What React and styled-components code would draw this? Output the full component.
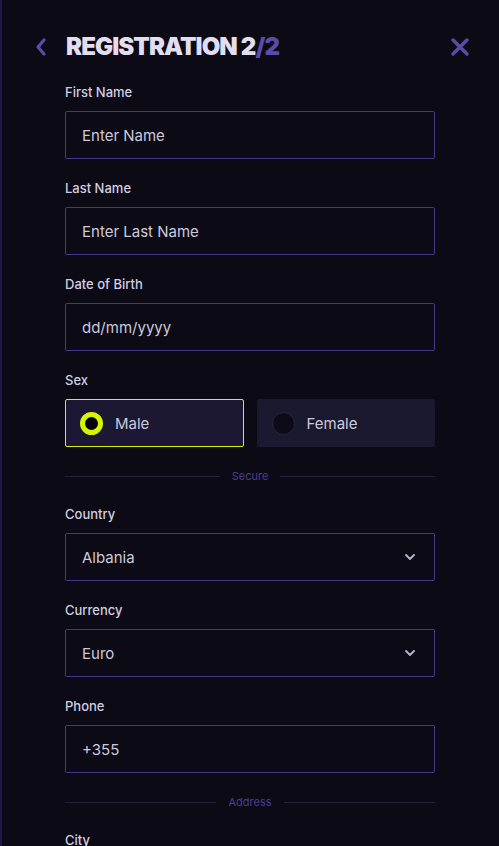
import React, { useState } from "react";
import styled, { createGlobalStyle } from "styled-components";

const GlobalStyle = createGlobalStyle`
  html, body {
    margin: 0;
    padding: 0;
    background: #0b0a15;
  }
  * {
    box-sizing: border-box;
  }
`;

const App = () => {
  const [sex, setSex] = useState("male");
  return (
    <StPage>
      <GlobalStyle />
      <StHeader>
        <StIconBtn>
          <svg width="14" height="20" viewBox="0 0 14 20">
            <path d="M10 3 L4 10 L10 17" fill="none" stroke="#5a4ca8" strokeWidth="3.2" strokeLinecap="round" strokeLinejoin="round" />
          </svg>
        </StIconBtn>
        <StTitle>
          REGISTRATION 2<span>/2</span>
        </StTitle>
        <StIconBtn>
          <svg width="20" height="20" viewBox="0 0 20 20">
            <path d="M3 3 L17 17 M17 3 L3 17" fill="none" stroke="#5a4ca8" strokeWidth="3.4" strokeLinecap="round" />
          </svg>
        </StIconBtn>
      </StHeader>
      <StForm>
        <StField>
          <StLabel>First Name</StLabel>
          <StBox>Enter Name</StBox>
        </StField>
        <StField>
          <StLabel>Last Name</StLabel>
          <StBox>Enter Last Name</StBox>
        </StField>
        <StField>
          <StLabel>Date of Birth</StLabel>
          <StBox>dd/mm/yyyy</StBox>
        </StField>
        <StField>
          <StLabel>Sex</StLabel>
          <StRadioRow>
            <StRadio active={sex === "male"} onClick={() => setSex("male")}>
              <StDot active={sex === "male"} />
              Male
            </StRadio>
            <StRadio active={sex === "female"} onClick={() => setSex("female")}>
              <StDot active={sex === "female"} />
              Female
            </StRadio>
          </StRadioRow>
        </StField>
        <StDivider>
          <span>Secure</span>
        </StDivider>
        <StField>
          <StLabel>Country</StLabel>
          <StBox>
            Albania
            <Chevron />
          </StBox>
        </StField>
        <StField>
          <StLabel>Currency</StLabel>
          <StBox>
            Euro
            <Chevron />
          </StBox>
        </StField>
        <StField>
          <StLabel>Phone</StLabel>
          <StBox>+355</StBox>
        </StField>
        <StDivider>
          <span>Address</span>
        </StDivider>
        <StField>
          <StLabel>City</StLabel>
        </StField>
      </StForm>
    </StPage>
  );
};

const Chevron = () => (
  <svg width="12" height="8" viewBox="0 0 12 8">
    <path d="M2 2 L6 6 L10 2" fill="none" stroke="#b9b5cc" strokeWidth="1.8" strokeLinecap="round" strokeLinejoin="round" />
  </svg>
);

export default App;

const StPage = styled.div`
  height: 846px;
  overflow: hidden;
  background: #0b0a15;
  border-left: 2px solid #1d1848;
  font-family: Inter, "Noto Sans", sans-serif;
  color: #d4d0e4;
`;

const StHeader = styled.div`
  display: flex;
  align-items: center;
  gap: 18px;
  padding: 32px 29px 0 32px;
  height: 62px;
`;

const StIconBtn = styled.div`
  display: flex;
  align-items: center;
  justify-content: center;
  &:last-child {
    margin-left: auto;
  }
`;

const StTitle = styled.h1`
  margin: 0;
  font-size: 24px;
  font-weight: 900;
  letter-spacing: -0.9px;
  line-height: 30px;
  color: #e2deef;
  span {
    color: #5a4ca8;
  }
`;

const StForm = styled.div`
  display: flex;
  flex-direction: column;
  padding: 22px 64px 0 63px;
`;

const StField = styled.div`
  display: flex;
  flex-direction: column;
  gap: 11px;
  margin-bottom: 21px;
`;

const StLabel = styled.div`
  font-size: 13px;
  line-height: 16px;
  font-weight: 500;
  color: #d2cee0;
`;

const StBox = styled.div`
  display: flex;
  align-items: center;
  justify-content: space-between;
  height: 48px;
  padding: 0 18px 0 16px;
  border: 1px solid #43398a;
  border-radius: 2px;
  font-size: 15px;
  color: #cdc9dc;
`;

const StRadioRow = styled.div`
  display: grid;
  grid-template-columns: 1fr 1fr;
  gap: 13px;
`;

const StRadio = styled.div`
  display: flex;
  align-items: center;
  gap: 12px;
  height: 48px;
  padding: 0 14px;
  border: 1px solid ${({ active }) => (active ? "#d6f200" : "transparent")};
  border-radius: 2px;
  background: ${({ active }) => (active ? "#1c1834" : "#1b192f")};
  font-size: 15px;
  color: #cdc9dc;
  cursor: pointer;
`;

const StDot = styled.span`
  width: 23px;
  height: 23px;
  border-radius: 50%;
  background: ${({ active }) => (active ? "#050508" : "#0c0b17")};
  border: ${({ active }) => (active ? "5px solid #d8f500" : "1px solid #2a2740")};
`;

const StDivider = styled.div`
  display: flex;
  align-items: center;
  gap: 12px;
  margin: 1px 0 23px;
  height: 14px;
  &::before,
  &::after {
    content: "";
    flex: 1;
    height: 1px;
    background: #24213a;
  }
  span {
    font-size: 11px;
    color: #4b3f92;
  }
`;
